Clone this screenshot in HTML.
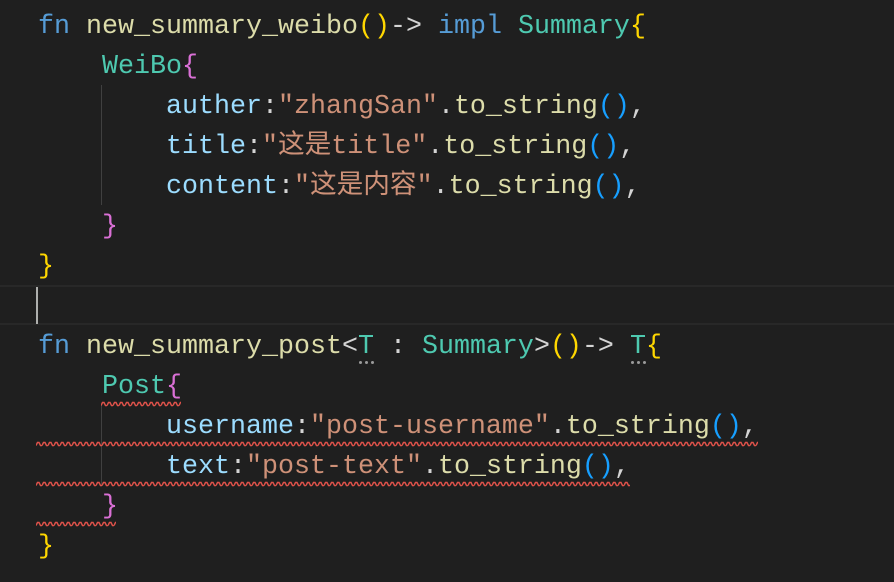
<!DOCTYPE html>
<html><head><meta charset="utf-8"><style>
html,body{margin:0;padding:0;background:#1f1f1f;width:894px;height:582px;overflow:hidden}
.l{position:absolute;left:38px;height:40px;line-height:40px;font-family:"Liberation Mono","Noto Sans CJK SC",monospace;font-size:26.67px;white-space:pre;color:#d4d4d4;margin-top:2px}
.k{color:#569cd6}.f{color:#dcdcaa}.t{color:#4ec9b0}.y{color:#ffd700}.p{color:#da70d6}.b{color:#179fff}.v{color:#9cdcfe}.s{color:#ce9178}
.g{position:absolute;width:1px;background:#404040}
.sq{position:absolute;height:6px}
.dt{position:absolute;width:3px;height:3px;border-radius:50%;background:#9a9a9a}
</style></head><body>
<div style="position:absolute;left:0;top:285px;width:894px;height:40px;box-sizing:border-box;border-top:2px solid #282828;border-bottom:2px solid #282828"></div>
<div style="position:absolute;left:36px;top:287px;width:2px;height:37px;background:#aeafad"></div>
<div class="g" style="left:101px;top:85px;height:120px"></div>
<div class="g" style="left:101px;top:405px;height:80px"></div>
<div class="l" style="top:5px"><span class="k">fn</span> <span class="f">new_summary_weibo</span><span class="y">()</span>-&gt; <span class="k">impl</span> <span class="t">Summary</span><span class="y">{</span></div>
<div class="l" style="top:45px">    <span class="t">WeiBo</span><span class="p">{</span></div>
<div class="l" style="top:85px">        <span class="v">auther</span>:<span class="s">"zhangSan"</span>.<span class="f">to_string</span><span class="b">()</span>,</div>
<div class="l" style="top:125px">        <span class="v">title</span>:<span class="s">"这是title"</span>.<span class="f">to_string</span><span class="b">()</span>,</div>
<div class="l" style="top:165px">        <span class="v">content</span>:<span class="s">"这是内容"</span>.<span class="f">to_string</span><span class="b">()</span>,</div>
<div class="l" style="top:205px">    <span class="p">}</span></div>
<div class="l" style="top:245px"><span class="y">}</span></div>
<div class="l" style="top:325px"><span class="k">fn</span> <span class="f">new_summary_post</span>&lt;<span class="t">T</span> : <span class="t">Summary</span>&gt;<span class="y">()</span>-&gt; <span class="t">T</span><span class="y">{</span></div>
<div class="l" style="top:365px">    <span class="t">Post</span><span class="p">{</span></div>
<div class="l" style="top:405px">        <span class="v">username</span>:<span class="s">"post-username"</span>.<span class="f">to_string</span><span class="b">()</span>,</div>
<div class="l" style="top:445px">        <span class="v">text</span>:<span class="s">"post-text"</span>.<span class="f">to_string</span><span class="b">()</span>,</div>
<div class="l" style="top:485px">    <span class="p">}</span></div>
<div class="l" style="top:525px"><span class="y">}</span></div>
<div class="dt" style="left:359px;top:361px"></div><div class="dt" style="left:365px;top:361px"></div><div class="dt" style="left:371px;top:361px"></div>
<div class="dt" style="left:631px;top:361px"></div><div class="dt" style="left:637px;top:361px"></div><div class="dt" style="left:643px;top:361px"></div>
<svg width="0" height="0" style="position:absolute"><defs><pattern id="w" width="6" height="6" patternUnits="userSpaceOnUse"><path d="M0 4.5 L1.5 1.5 L3 1.5 L4.5 4.5 L6 4.5" stroke="#e0524a" stroke-width="1.4" fill="none"/></pattern></defs></svg>
<svg class="sq" style="left:101px;top:401px;width:80px"><rect width="80" height="6" fill="url(#w)"/></svg>
<svg class="sq" style="left:36px;top:441px;width:722px"><rect width="722" height="6" fill="url(#w)"/></svg>
<svg class="sq" style="left:36px;top:481px;width:594px"><rect width="594" height="6" fill="url(#w)"/></svg>
<svg class="sq" style="left:36px;top:521px;width:80px"><rect width="80" height="6" fill="url(#w)"/></svg>
</body></html>
